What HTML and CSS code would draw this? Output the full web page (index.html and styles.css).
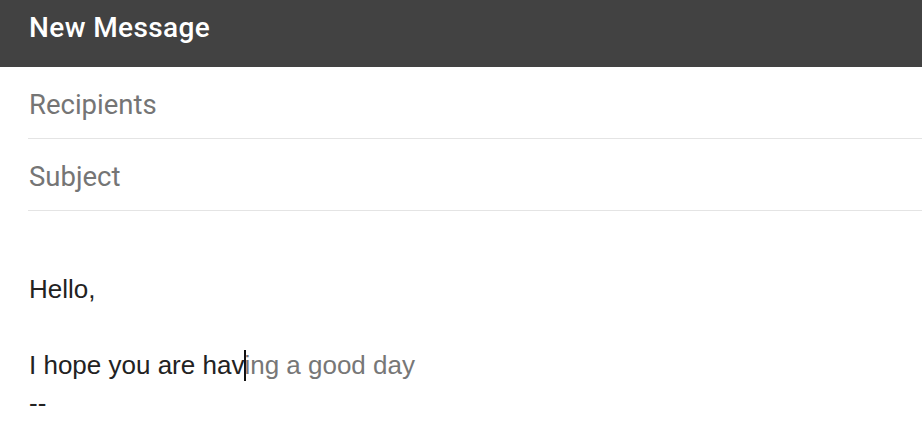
FILE: index.html
```html
<!DOCTYPE html>
<html lang="en">
<head>
    <meta charset="UTF-8">
    <meta name="viewport" content="width=device-width, initial-scale=1.0">
    <title>New Message</title>
    <link rel="stylesheet" href="styles.css">
</head>
<body>

    <!-- Title bar -->
    <div class="titlebar">New Message</div>

    <!-- Address fields -->
    <div class="field">Recipients</div>
    <div class="field">Subject</div>

    <!-- Message body with inline suggestion -->
    <div class="body">
        <p>Hello,</p>
        <p>&nbsp;</p>
        <p>I hope you are hav<span class="caret"></span><span class="suggest">ing a good day</span></p>
        <p>--</p>
    </div>

</body>
</html>
```

FILE: styles.css
```css
/* Page */
body {
    margin: 0;
    background-color: #fff;
}

/* Dark header bar */
.titlebar {
    height: 67px;
    box-sizing: border-box;
    padding: 11px 29px 0;
    background-color: #424242;
    color: #fff;
    font-family: Roboto, "Noto Sans", sans-serif;
    font-weight: 500;
    font-size: 28px;
    letter-spacing: 0.4px;
}

/* Recipients / Subject rows */
.field {
    margin-left: 28px;
    padding-left: 1px;
    height: 71px;
    line-height: 76px;
    overflow: hidden;
    border-bottom: 1px solid #e4e4e4;
    color: #757575;
    font-family: Roboto, "Noto Sans", sans-serif;
    font-size: 27.5px;
}

/* Message text */
.body {
    padding: 59px 29px 0;
    font-family: "Liberation Sans", Arial, sans-serif;
    font-size: 26px;
    line-height: 38px;
    color: #222;
}

.body p {
    margin: 0;
}

.caret {
    display: inline-block;
    width: 2px;
    height: 31px;
    margin-right: -2px;
    background-color: #111;
    vertical-align: -7px;
}

.suggest {
    color: #777;
}
```
